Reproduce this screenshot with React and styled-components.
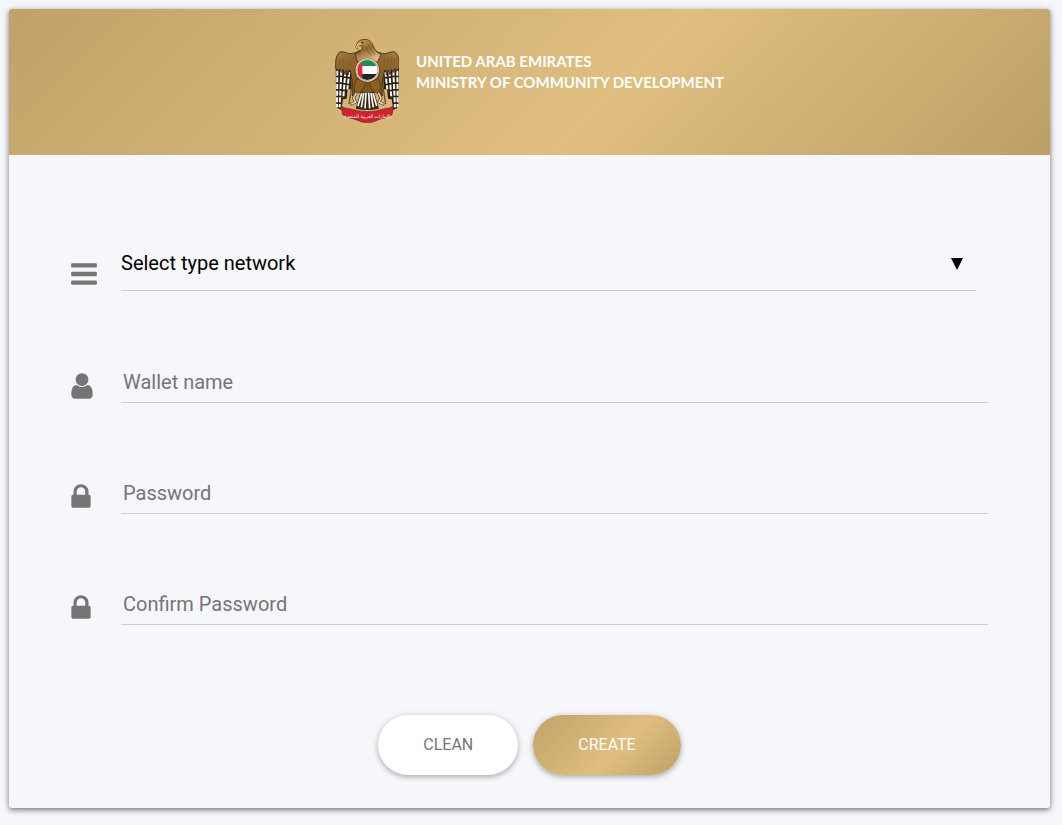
import React, { useState } from "react";
import styled, { createGlobalStyle, css } from "styled-components";

const GlobalStyle = createGlobalStyle`
  *, *::before, *::after { box-sizing: border-box; }
  body {
    margin: 0;
    background: #f5f7fb;
    color: #000;
    font-family: Roboto, "Liberation Sans", sans-serif;
  }
`;

const gold = css`
  background: linear-gradient(135deg, #c0a268 0%, #e0be80 58%, #bd9f66 100%);
`;

const Page = styled.main`
  padding: 9px 12px 16px 9px;
`;

const Card = styled.section`
  overflow: hidden;
  border-radius: 3px;
  background: #f5f7fb;
  box-shadow: 0 2px 5px rgba(0, 0, 0, 0.42), 0 1px 10px rgba(0, 0, 0, 0.16);
`;

const Banner = styled.header`
  ${gold}
  display: flex;
  justify-content: center;
  align-items: flex-start;
  gap: 17px;
  padding: 30px 20px 32px;
`;

const BannerTitle = styled.h1`
  margin: 0;
  padding-top: 12px;
  color: #fff;
  font: 700 15px/21px Lato, "Open Sans", sans-serif;
`;

const TitleLine = styled.span`
  display: block;
`;

const Emblem = styled.svg`
  flex: none;
  width: 64px;
  height: 84px;
`;

const Form = styled.form`
  display: flex;
  flex-direction: column;
  gap: 71px;
  padding: 96px 62px 33px;
`;

const Row = styled.div`
  display: flex;
  align-items: flex-start;
`;

const IconLabel = styled.label`
  flex: none;
  width: 50px;
  padding-top: 8px;
  color: #757575;
`;

const Glyph = styled.svg`
  display: block;
  height: 30px;
  fill: currentColor;
`;

const control = css`
  width: 100%;
  height: 40px;
  border: 0;
  border-bottom: 1px solid #cccdd1;
  border-radius: 0;
  outline: none;
  background: transparent;
  font: 400 20px/24px Roboto, "Liberation Sans", sans-serif;
  &:focus-visible { border-bottom-color: #c0a063; }
`;

const TextInput = styled.input`
  ${control}
  padding: 0 2px 2px;
  color: #000;
  &::placeholder { color: #757575; opacity: 1; }
`;

const SelectBox = styled.div`
  position: relative;
  flex: 1;
  margin-right: 12px;
  padding-bottom: 1px;
`;

const Select = styled.select`
  ${control}
  display: block;
  padding: 0 32px 15px 0;
  color: #000;
  appearance: none;
`;

const Arrow = styled.svg`
  position: absolute;
  top: 7px;
  right: 13px;
  width: 12px;
  height: 12px;
  pointer-events: none;
`;

const Actions = styled.div`
  display: flex;
  justify-content: center;
  gap: 15px;
  padding-top: 19px;
`;

const Button = styled.button`
  height: 60px;
  padding: 0 45px;
  border: 0;
  border-radius: 30px;
  background: #fff;
  color: #757575;
  font: 400 16px/20px Roboto, "Liberation Sans", sans-serif;
  text-transform: uppercase;
  box-shadow: 0 2px 5px rgba(0, 0, 0, 0.24), 0 1px 8px rgba(0, 0, 0, 0.1);
  cursor: pointer;
  ${({ $primary }) => $primary && css`
    ${gold}
    color: #fff;
  `}
`;

const glyphs = {
  bars: {
    box: "128 0 1536 1792",
    width: 26,
    d: "M1664 1344v128q0 26-19 45t-45 19h-1408q-26 0-45-19t-19-45v-128q0-26 19-45t45-19h1408q26 0 45 19t19 45zm0-512v128q0 26-19 45t-45 19h-1408q-26 0-45-19t-19-45v-128q0-26 19-45t45-19h1408q26 0 45 19t19 45zm0-512v128q0 26-19 45t-45 19h-1408q-26 0-45-19t-19-45v-128q0-26 19-45t45-19h1408q26 0 45 19t19 45z",
  },
  user: {
    box: "256 0 1280 1792",
    width: 22,
    d: "M1536 1399q0 109-62.5 187t-150.5 78h-854q-88 0-150.5-78t-62.5-187q0-85 8.5-160.5t31.5-152 58.5-131 94-89 134.5-34.5q131 128 313 128t313-128q76 0 134.5 34.5t94 89 58.5 131 31.5 152 8.5 160.5zm-256-887q0 159-112.5 271.5t-271.5 112.5-271.5-112.5-112.5-271.5 112.5-271.5 271.5-112.5 271.5 112.5 112.5 271.5z",
  },
  lock: {
    box: "320 0 1152 1792",
    width: 20,
    d: "M640 768h512v-192q0-106-75-181t-181-75-181 75-75 181v192zm832 96v576q0 40-28 68t-68 28h-960q-40 0-68-28t-28-68v-576q0-40 28-68t68-28h32v-192q0-184 132-316t316-132 316 132 132 316v192h32q40 0 68 28t28 68z",
  },
};

function Icon({ name }) {
  const { box, width, d } = glyphs[name];
  return (
    <Glyph viewBox={box} width={width} aria-hidden="true">
      <path d={d} />
    </Glyph>
  );
}

// One wing with its barred flight feathers; the other side is its mirror image.
function Wing() {
  return (
    <g>
      <path d="M38 112L86 122L84 178L74 178L71 206L60 208L55 240L40 232Z" fill="#2a2019" />
      <path d="M43 122L42 232M55 122L50 232M67 124L61 204M79 126L73 178" fill="none" stroke="#fffaf0" strokeWidth="6" strokeDasharray="15 5" />
      <path d="M90 130L84 184L78 222M98 146L92 184" fill="none" stroke="#6d4a1c" strokeWidth="4" />
      <path d="M38 114Q36 82 46 70Q52 62 62 66Q80 76 98 68L112 60L126 90Q100 98 95 122Q96 140 108 152L98 182L88 198Q92 160 82 122L78 120L76 134L70 120L66 134L60 118L56 128L50 116L46 124Z" fill="url(#plume)" stroke="#3d2913" strokeWidth="2.5" strokeLinejoin="round" />
      <path d="M50 84L52 112M60 84L63 114M71 87L73 116M82 88L83 112" fill="none" stroke="#5b3d18" strokeWidth="1.5" opacity="0.6" />
    </g>
  );
}

function EagleEmblem() {
  return (
    <Emblem viewBox="36 27 192 252" role="img" aria-label="United Arab Emirates emblem">
      <defs>
        <linearGradient id="plume" x1="0" y1="0" x2="0.4" y2="1">
          <stop offset="0" stopColor="#b08a50" />
          <stop offset="0.25" stopColor="#946a34" />
          <stop offset="1" stopColor="#80561c" />
        </linearGradient>
        <linearGradient id="neck" x1="0" y1="0" x2="0.5" y2="1">
          <stop offset="0" stopColor="#c9a468" />
          <stop offset="0.5" stopColor="#94692f" />
          <stop offset="1" stopColor="#dcc091" />
        </linearGradient>
        <clipPath id="disc"><circle cx="133" cy="120" r="30" /></clipPath>
      </defs>
      <Wing />
      <g transform="translate(266 0) scale(-1 1)"><Wing /></g>
      <path d="M104 148H162L156 186H110Z" fill="#7d531c" />
      <path d="M112 186H154L168 236Q133 244 98 236Z" fill="#33261c" />
      <path d="M116 190L105 228M122 189L115 232M129 188L126 235M137 188L140 235M144 189L151 232M150 190L161 228" stroke="#fffaf0" strokeWidth="5" />
      <path d="M100 146Q91 166 95 184Q102 194 112 186Q124 174 128 156ZM166 146Q175 166 171 184Q164 194 154 186Q142 174 138 156Z" fill="#8c6020" stroke="#4d3312" strokeWidth="2" />
      <path d="M99 190L92 204L98 216L86 222M167 190L174 204L168 216L180 222" fill="none" stroke="#4d3a23" strokeWidth="9" strokeLinecap="round" strokeLinejoin="round" />
      <path d="M99 190L92 204L98 216L86 222M167 190L174 204L168 216L180 222" fill="none" stroke="#ead9b5" strokeWidth="5" strokeLinecap="round" strokeLinejoin="round" />
      <path d="M99 50C101 36 112 28 126 28C141 29 147 38 151 49C156 62 163 68 174 74L162 98L133 86L104 98L96 72C112 66 120 57 117 49Q108 44 104 48Q100 52 103 57Q98 55 99 50Z" fill="url(#neck)" stroke="#4a3015" strokeWidth="2.5" />
      <path d="M99 50Q101 40 111 38L118 43Q108 43 104 48Q101 52 103 57Q98 55 99 50Z" fill="#efc95f" />
      <circle cx="118" cy="38" r="2.5" fill="#20180e" />
      <path d="M136 44Q142 62 156 74M129 52Q134 66 146 78" fill="none" stroke="#6d4b22" strokeWidth="2" />
      <circle cx="133" cy="120" r="37" fill="#6f4a2b" />
      <circle cx="133" cy="120" r="35" fill="#f3ead4" />
      <circle cx="133" cy="120" r="32" fill="none" stroke="#9b7b6b" strokeWidth="2" />
      <g clipPath="url(#disc)">
        <path d="M100 85H168V109H100Z" fill="#18914f" />
        <path d="M100 108H168V132H100Z" fill="#fff" />
        <path d="M100 132H168V155H100Z" fill="#252326" />
        <path d="M100 85H118V155H100Z" fill="#e22b36" />
      </g>
      <path d="M54 228Q64 236 80 236Q133 254 186 236Q202 236 212 228L207 254Q196 263 176 266Q160 271 150 276L133 278L116 276Q106 271 90 266Q70 263 59 254Z" fill="#d3222f" stroke="#6b2226" strokeWidth="2" strokeLinejoin="round" />
      <text x="133" y="263" textAnchor="middle" fill="#fff" fontFamily="DejaVu Sans, sans-serif" fontSize="14">الإمارات العربية المتحدة</text>
    </Emblem>
  );
}

const fields = [
  { id: "wallet", icon: "user", type: "text", label: "Wallet name" },
  { id: "password", icon: "lock", type: "password", label: "Password" },
  { id: "confirm", icon: "lock", type: "password", label: "Confirm Password" },
];

const blank = { network: "", wallet: "", password: "", confirm: "" };

export default function App() {
  const [values, setValues] = useState(blank);
  const update = (event) => setValues({ ...values, [event.target.id]: event.target.value });

  return (
    <>
      <GlobalStyle />
      <Page>
        <Card>
          <Banner>
            <EagleEmblem />
            <BannerTitle>
              <TitleLine>UNITED ARAB EMIRATES</TitleLine>
              <TitleLine>MINISTRY OF COMMUNITY DEVELOPMENT</TitleLine>
            </BannerTitle>
          </Banner>
          <Form onSubmit={(event) => event.preventDefault()}>
            <Row>
              <IconLabel htmlFor="network" aria-label="Network type"><Icon name="bars" /></IconLabel>
              <SelectBox>
                <Select id="network" value={values.network} onChange={update}>
                  <option value="">Select type network</option>
                </Select>
                <Arrow viewBox="0 0 12 12" aria-hidden="true"><path d="M0 0H12L6 12Z" /></Arrow>
              </SelectBox>
            </Row>
            {fields.map(({ id, icon, type, label }) => (
              <Row key={id}>
                <IconLabel htmlFor={id} aria-label={label}><Icon name={icon} /></IconLabel>
                <TextInput id={id} type={type} placeholder={label} value={values[id]} onChange={update} />
              </Row>
            ))}
            <Actions>
              <Button type="button" onClick={() => setValues(blank)}>Clean</Button>
              <Button type="submit" $primary>Create</Button>
            </Actions>
          </Form>
        </Card>
      </Page>
    </>
  );
}
